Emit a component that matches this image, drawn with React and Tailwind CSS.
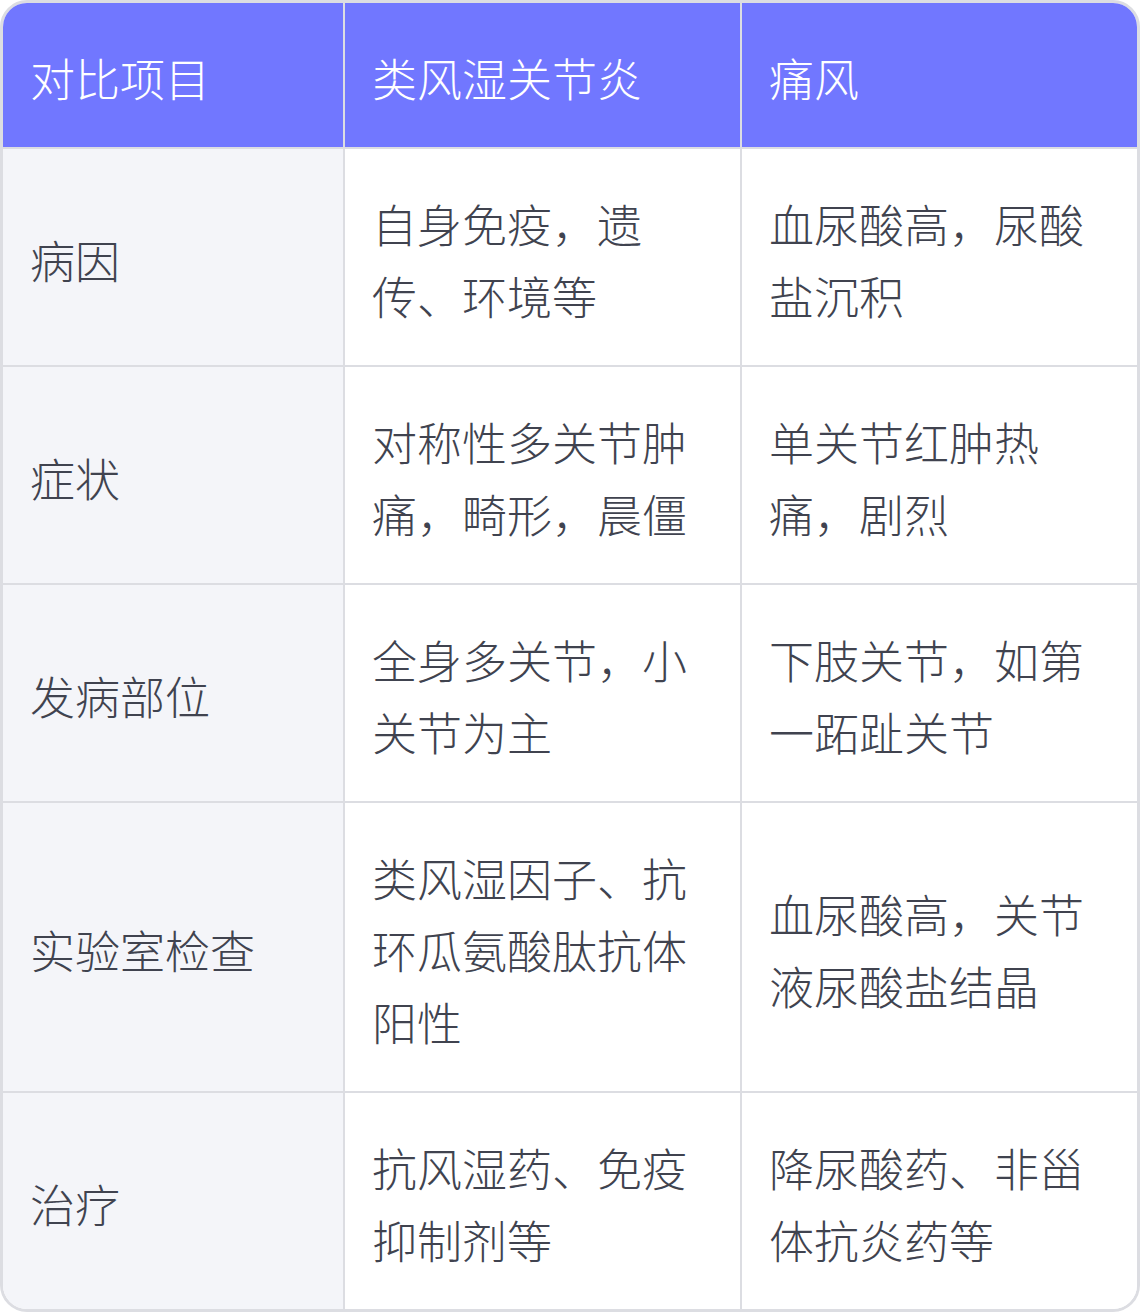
const rows = [
  { item: '病因', ra: '自身免疫，遗传、环境等', gout: '血尿酸高，尿酸盐沉积' },
  { item: '症状', ra: '对称性多关节肿痛，畸形，晨僵', gout: '单关节红肿热痛，剧烈' },
  { item: '发病部位', ra: '全身多关节，小关节为主', gout: '下肢关节，如第一跖趾关节' },
  { item: '实验室检查', ra: '类风湿因子、抗环瓜氨酸肽抗体阳性', gout: '血尿酸高，关节液尿酸盐结晶' },
  { item: '治疗', ra: '抗风湿药、免疫抑制剂等', gout: '降尿酸药、非甾体抗炎药等' },
]

const font = { fontFamily: '"Noto Sans CJK SC", "Noto Sans", sans-serif' }

function Cell({ children, first, last, lastRow }) {
  return (
    <div
      className={`flex items-center px-[27px] pt-[39px] pb-[33px] text-[45px] font-light leading-[72px] text-[#40434f] border-[#dcdde2] ${
        first ? 'bg-[#f4f5f9]' : 'bg-white'
      } ${last ? '' : 'border-r-2'} ${lastRow ? '' : 'border-b-2'}`}
    >
      <span className="break-all">{children}</span>
    </div>
  )
}

export default function App() {
  return (
    <div className="w-[1140px] h-[1312px] bg-white" style={font}>
      <div className="overflow-hidden rounded-[27px] border-[3px] border-[#dcdde2]">
        <div className="grid grid-cols-[342px_397px_395px]">
          {['对比项目', '类风湿关节炎', '痛风'].map((h, i) => (
            <div
              key={h}
              className={`flex items-center px-[27px] pt-[39px] pb-[33px] text-[45px] font-light leading-[72px] text-white bg-[#7177ff] border-b-2 border-[#dcdde2] ${
                i < 2 ? 'border-r-2' : ''
              }`}
            >
              {h}
            </div>
          ))}
          {rows.map((r, idx) => {
            const lastRow = idx === rows.length - 1
            return [
              <Cell key={r.item + 'a'} first lastRow={lastRow}>{r.item}</Cell>,
              <Cell key={r.item + 'b'} lastRow={lastRow}>{r.ra}</Cell>,
              <Cell key={r.item + 'c'} last lastRow={lastRow}>{r.gout}</Cell>,
            ]
          })}
        </div>
      </div>
    </div>
  )
}
